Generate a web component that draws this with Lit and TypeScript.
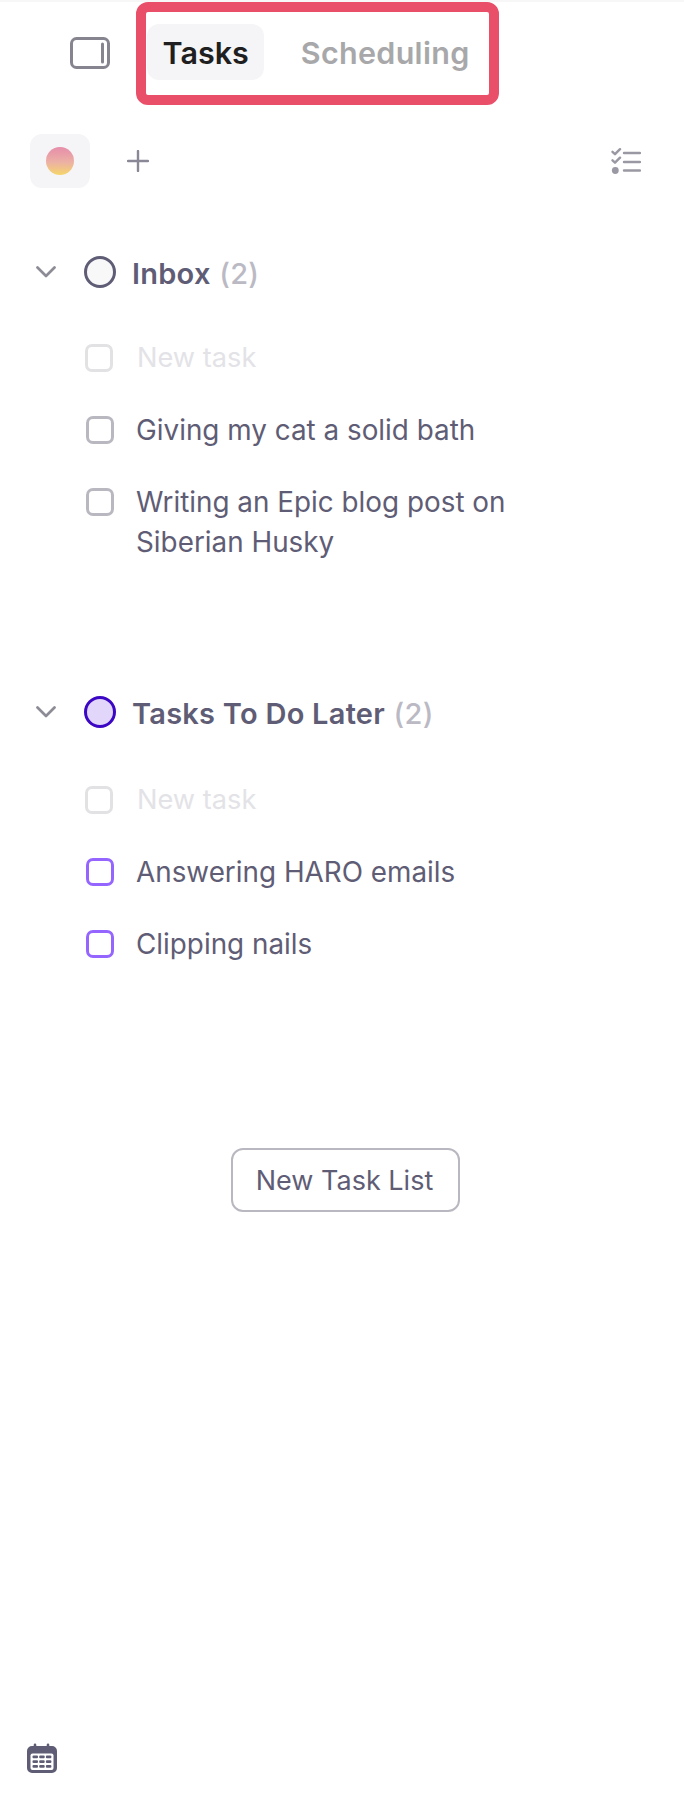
import { LitElement, html, css, svg } from "lit";
import { customElement } from "lit/decorators.js";

const chevron = html`<svg class="chev" width="20" height="12" viewBox="0 0 20 12" fill="none"><path d="M1.5 1.5 10 10l8.5-8.5" stroke="#8c8b96" stroke-width="2.7" stroke-linecap="round" stroke-linejoin="round"/></svg>`;

interface Section { name: string; count: number; purple: boolean; tasks: string[]; }

const sections: Section[] = [
  { name: "Inbox", count: 2, purple: false, tasks: ["Giving my cat a solid bath", "Writing an Epic blog post on Siberian Husky"] },
  { name: "Tasks To Do Later", count: 2, purple: true, tasks: ["Answering HARO emails", "Clipping nails"] },
];

@customElement("app-root")
export class AppRoot extends LitElement {
  static styles = css`
    :host {
      display: block;
      width: 684px;
      height: 1800px;
      background: #fff;
      font-family: Inter, "Liberation Sans", sans-serif;
      color: #5f5d75;
      overflow: hidden;
    }
    .page { height: 1800px; display: flex; flex-direction: column; box-sizing: border-box; border-top: 2px solid #f7f7f7; }
    .top { display: flex; align-items: center; height: 103px; padding-left: 70px; }
    .side-icon { display: block; flex: none; margin-right: 26px; margin-bottom: 2px; }
    .tabbox {
      box-sizing: border-box; width: 363px; height: 103px;
      border: 10px solid #e94f69; border-radius: 12px;
      display: flex; align-items: center; padding: 0 0 3px 1px;
      font-size: 30.5px; font-weight: 600; line-height: 36px;
    }
    .tab { box-sizing: border-box; height: 56px; display: flex; align-items: center; padding: 2px 15.5px 0; border-radius: 12px; }
    .tab.on { background: #f5f5f7; color: #1f1f21; }
    .tab.off { color: #a8a8aa; margin-left: 21px; letter-spacing: 0.3px; }
    .tools { display: flex; align-items: center; height: 54px; margin-top: 29px; padding: 0 43px 0 30px; }
    .avatar { width: 60px; height: 54px; border-radius: 12px; background: #f5f5f7; display: flex; align-items: center; justify-content: center; }
    .avatar span { width: 28px; height: 28px; border-radius: 50%; background: linear-gradient(180deg, #e68daa 0%, #ecb1a4 55%, #f6d66a 100%); }
    .plus { display: block; margin-left: 37px; }
    .listicon { display: block; margin-left: auto; }
    .sections { display: flex; flex-direction: column; margin-top: 66px; }
    .section { display: flex; flex-direction: column; }
    .section + .section { margin-top: 132px; }
    .head { display: flex; align-items: center; height: 36px; padding-left: 36px; }
    .chev { display: block; flex: none; margin-right: 28px; }
    .dot { box-sizing: border-box; flex: none; width: 32px; height: 32px; border-radius: 50%; border: 3px solid #5f5d75; background: #f8f8f9; margin-right: 16px; }
    .dot.purple { border-color: #3b07c4; background: #e3d6fb; }
    .title { font-size: 29px; font-weight: 600; line-height: 36px; white-space: nowrap; letter-spacing: 0.25px; padding-top: 3px; }
    .count { font-weight: 500; color: #bbbac4; margin-left: 1px; }
    .tasks { display: flex; flex-direction: column; gap: 32px; margin-top: 48px; padding-left: 86px; }
    .purple .tasks { margin-top: 50px; }
    .task { display: flex; align-items: flex-start; font-size: 27.85px; font-weight: 400; line-height: 40px; width: 430px; }
    .box { box-sizing: border-box; flex: none; width: 28px; height: 28px; margin: 6px 22px 0 0; border: 3px solid #b9b8c1; border-radius: 7px; }
    .purple .box { border-color: #9466ff; }
    .task.new { color: #e3e3e7; font-size: 27.2px; }
    .task.new .box { border-color: #e2e2e4; margin-left: -1px; margin-right: 24px; }
    .actions { display: flex; justify-content: center; margin-top: 184px; padding-left: 7px; }
    .newlist {
      box-sizing: border-box; width: 229px; height: 64px; border: 2px solid #b9b8c1; border-radius: 12px;
      background: #fff; color: #5f5d75; font: 400 27px/1 Inter, "Liberation Sans", sans-serif; padding: 1px 2px 0 0;
    }
    .cal { display: block; margin: auto 0 27px 27px; }
  `;

  private taskRow(text: string, isNew = false) {
    return html`<div class="task ${isNew ? "new" : ""}"><span class="box"></span><span>${text}</span></div>`;
  }

  render() {
    return html`<div class="page">
      <div class="top">
        <svg class="side-icon" width="40" height="32" viewBox="0 0 40 32" fill="none">
          <rect x="1.5" y="1.5" width="37" height="29" rx="5" stroke="#85848f" stroke-width="3"/>
          <path d="M32.5 7v18" stroke="#85848f" stroke-width="3" stroke-linecap="round"/>
        </svg>
        <div class="tabbox">
          <div class="tab on">Tasks</div>
          <div class="tab off">Scheduling</div>
        </div>
      </div>
      <div class="tools">
        <div class="avatar"><span></span></div>
        <svg class="plus" width="22" height="22" viewBox="0 0 22 22" fill="none"><path d="M11 1v20M1 11h20" stroke="#8a8896" stroke-width="2.4" stroke-linecap="round"/></svg>
        <svg class="listicon" width="30" height="27" viewBox="0 0 30 27" fill="none" stroke="#9a99a3">
          <path d="M1.5 3.8 4 6.2 9 1.2M1.5 12.3 4 14.7 9 9.7" stroke-width="2.4" stroke-linecap="round" stroke-linejoin="round"/>
          <path d="M13 5h16M13 14h16M13 22.5h16" stroke-width="2.4" stroke-linecap="round"/>
          <circle cx="4.3" cy="22.5" r="3.4" fill="#9a99a3" stroke="none"/>
        </svg>
      </div>
      <div class="sections">
        ${sections.map(s => html`<div class="section ${s.purple ? "purple" : ""}">
          <div class="head">${chevron}<span class="dot ${s.purple ? "purple" : ""}"></span>
            <span class="title">${s.name} <span class="count">(${s.count})</span></span></div>
          <div class="tasks">
            ${this.taskRow("New task", true)}
            ${s.tasks.map(t => this.taskRow(t))}
          </div>
        </div>`)}
      </div>
      <div class="actions"><button class="newlist">New Task List</button></div>
      <svg class="cal" width="30" height="30" viewBox="0 0 30 30">
        <path d="M8 0.5a1.3 1.3 0 0 1 1.3 1.3V3h10.4V1.8a1.3 1.3 0 0 1 2.6 0V3H25a5 5 0 0 1 5 5v17a5 5 0 0 1-5 5H5a5 5 0 0 1-5-5V8a5 5 0 0 1 5-5h1.7V1.8A1.3 1.3 0 0 1 8 .5Z" fill="#5f5d75"/>
        <rect x="3.5" y="10.5" width="23" height="16.5" rx="2" fill="#fff"/>
        ${[5.5, 12.2, 18.9].map(x => [12.5, 17.2, 21.9].map(y => svg`<rect x="${x}" y="${y}" width="5.5" height="2.8" rx="1" fill="#5f5d75"/>`))}
      </svg>
    </div>`;
  }
}
